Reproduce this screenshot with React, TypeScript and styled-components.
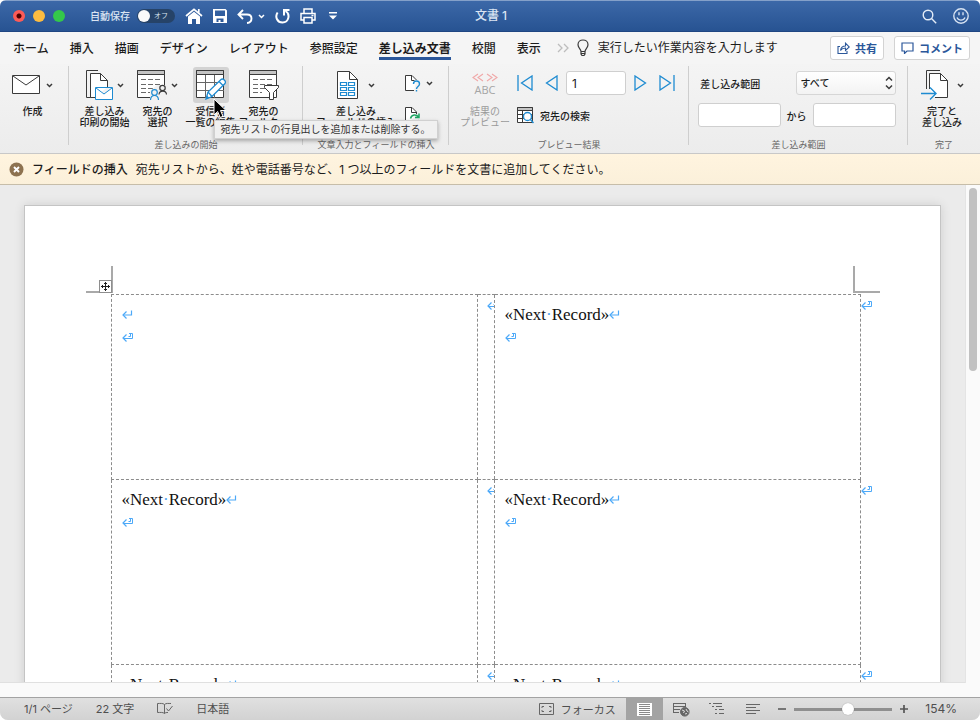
import React from "react";
import styled, { createGlobalStyle, css } from "styled-components";

const INK = "#3a3a3a";
const BLUE = "#1e8bd1";
const BRAND = "#2b579a";

const GlobalStyle = createGlobalStyle`
  *, *::before, *::after { box-sizing: border-box; }
  html, body { margin: 0; padding: 0; background: #fff; }
  body, button, input, select {
    font-family: Inter, "Noto Sans CJK JP", sans-serif;
    color: #1c1c1c;
  }
  button { border: 0; padding: 0; background: none; cursor: default; }
`;

const Window = styled.div`
  display: flex;
  flex-direction: column;
  height: 100vh;
  min-height: 400px;
  overflow: hidden;
  border-radius: 6px 6px 8px 8px;
  background: #ebebeb;
`;

/* Title bar */
const TitleBar = styled.header`
  flex: none;
  display: grid;
  grid-template-columns: 1fr auto 1fr;
  align-items: center;
  height: 32px;
  padding: 0 11px 0 13px;
  color: #fff;
  background: linear-gradient(#3c68a8, #275392);
  border-top: 1px solid #84a0c9;
  border-bottom: 1px solid #1f4682;
`;
const TitleTools = styled.div<{ $end?: boolean }>`
  display: flex;
  align-items: center;
  justify-content: ${(p) => (p.$end ? "flex-end" : "flex-start")};
  gap: ${(p) => (p.$end ? 16 : 10)}px;
  svg { display: block; }
`;
const Lights = styled.div`
  display: flex;
  gap: 8px;
  margin-right: 15px;
`;
const Light = styled.button<{ $color: string; $dot?: boolean }>`
  width: 12px;
  height: 12px;
  border-radius: 50%;
  background: ${(p) => (p.$dot ? `radial-gradient(circle, #4d0000 2px, ${p.$color} 3px)` : p.$color)};
`;
const AutoSave = styled.label`
  display: flex;
  align-items: center;
  gap: 7px;
  font-size: 10px;
  font-weight: 500;
  line-height: 14px;
  color: #dbe5f3;
`;
const Switch = styled.button`
  display: flex;
  align-items: center;
  gap: 4px;
  width: 38px;
  height: 14px;
  padding: 0 1px;
  border-radius: 7px;
  background: #264368;
  color: #dbe5f3;
  font-size: 7px;
  line-height: 12px;
  &::before {
    content: "";
    width: 12px;
    height: 12px;
    border-radius: 50%;
    background: #fafafa;
  }
`;
const IconButton = styled.button`
  display: flex;
  align-items: center;
  justify-content: center;
  gap: 5px;
  color: inherit;
  svg { display: block; flex: none; }
`;
const DocTitle = styled.h1`
  margin: 0;
  font-size: 12px;
  font-weight: 500;
  line-height: 16px;
  color: #dbe5f3;
`;

/* Tabs */
const TabRow = styled.nav`
  flex: none;
  display: flex;
  align-items: center;
  height: 32px;
  padding: 0 10px 0 13px;
  background: #f5f5f5;
`;
const Tabs = styled.div`
  display: flex;
  gap: 21px;
`;
const Tab = styled.button<{ $active?: boolean }>`
  padding: 4px 0 0;
  border-bottom: 3px solid transparent;
  font-size: 12px;
  line-height: 17px;
  font-weight: 500;
  white-space: nowrap;
  ${(p) =>
    p.$active &&
    css`
      font-weight: 700;
      border-image: linear-gradient(${BRAND}, ${BRAND}) 1;
    `}
`;
const TellMe = styled.button`
  display: flex;
  align-items: center;
  gap: 9px;
  margin-left: 8px;
  font-size: 12px;
  line-height: 18px;
  white-space: nowrap;
`;
const More = styled(IconButton)`
  margin-left: 16px;
`;
const TabActions = styled.div`
  display: flex;
  gap: 10px;
  margin-left: auto;
`;
const Outlined = styled.button`
  display: flex;
  align-items: center;
  justify-content: center;
  gap: 5px;
  height: 24px;
  padding: 0 6px;
  border: 1px solid #d3d3d3;
  border-radius: 3px;
  background: #fff;
  color: ${BRAND};
  font-size: 11px;
  font-weight: 700;
  white-space: nowrap;
`;

/* Ribbon */
const Ribbon = styled.div`
  flex: none;
  display: grid;
  grid-template-columns: 69fr 234fr 146fr 240fr 219fr 72fr;
  height: 90px;
  background: linear-gradient(#f4f4f4, #ececec);
  border-bottom: 1px solid #c8c8c8;
`;
const Group = styled.section`
  position: relative;
  display: flex;
  flex-direction: column;
  align-items: center;
  padding-top: 3px;
  &:not(:last-child)::after {
    content: "";
    position: absolute;
    right: 0;
    top: 2px;
    height: 79px;
    width: 1px;
    background: #cecece;
  }
`;
const GroupBody = styled.div<{ $gap?: number }>`
  flex: 1;
  display: flex;
  gap: ${(p) => p.$gap ?? 1}px;
  padding-right: 4px;
`;
const Caption = styled.div`
  height: 14px;
  font-size: 9px;
  line-height: 12px;
  color: #666;
  white-space: nowrap;
`;
const BigButton = styled.button<{ $faded?: boolean; $w?: number }>`
  position: relative;
  display: flex;
  flex-direction: column;
  align-items: center;
  align-self: flex-start;
  width: ${(p) => p.$w ?? 52}px;
  font-size: 10px;
  line-height: 11px;
  font-weight: 500;
  white-space: nowrap;
  ${(p) => p.$faded && css`color: #9a9a9a; font-weight: 400;`}
`;
const Face = styled.span<{ $pressed?: boolean; $gap?: number }>`
  display: flex;
  align-items: center;
  justify-content: center;
  gap: ${(p) => p.$gap ?? 3}px;
  height: 36px;
  margin-bottom: 3px;
  padding: 0 3px;
  border-radius: 3px;
  background: ${(p) => (p.$pressed ? "#d3d3d3" : "transparent")};
  svg { display: block; flex: none; }
`;
const Tooltip = styled.span`
  position: absolute;
  z-index: 3;
  left: 29px;
  top: 53px;
  padding: 0 6px;
  background: #f0f0f0;
  border: 1px solid #d0d0d0;
  box-shadow: 0 2px 4px rgba(0, 0, 0, 0.3);
  font-size: 10px;
  line-height: 17px;
  font-weight: 400;
  white-space: nowrap;
  color: #333;
`;
const Pointer = styled.svg`
  position: absolute;
  z-index: 4;
  left: 28px;
  top: 31px;
`;
const Abc = styled.span`
  display: flex;
  flex-direction: column;
  align-items: center;
  gap: 1px;
  font-family: "Open Sans", sans-serif;
  font-size: 11px;
  line-height: 14px;
  color: #a5a5a5;
`;
const Row = styled.div<{ $gap?: number }>`
  display: flex;
  align-items: center;
  gap: ${(p) => p.$gap ?? 0}px;
  height: 24px;
  font-size: 10px;
  font-weight: 500;
  white-space: nowrap;
`;
const Stack = styled.div`
  display: flex;
  flex-direction: column;
  gap: 8px;
  padding-top: 4px;
`;
const Spread = styled(Row)`
  justify-content: space-between;
`;
const Field = styled.input<{ $w: number }>`
  width: ${(p) => p.$w}px;
  height: 24px;
  padding: 0 5px;
  border: 1px solid #cfcfcf;
  border-radius: 3px;
  background: #fff;
  font-size: 12px;
`;
const SelectBox = styled.span`
  display: grid;
  align-items: center;
  width: 100px;
  height: 24px;
  border: 1px solid #d6d6d6;
  border-radius: 3px;
  background: linear-gradient(#fff, #f3f3f3);
  > * { grid-area: 1 / 1; }
  svg { justify-self: end; margin-right: 2px; pointer-events: none; }
`;
const Select = styled.select`
  appearance: none;
  height: 22px;
  padding: 0 4px;
  border: 0;
  background: none;
  font-size: 10px;
  font-weight: 500;
`;
const FindButton = styled(IconButton)`
  gap: 6px;
  font-size: 10px;
  font-weight: 500;
  color: #1c1c1c;
`;

/* Message bar */
const Message = styled.div`
  flex: none;
  display: flex;
  align-items: center;
  gap: 8px;
  height: 31px;
  padding: 1px 9px 0;
  background: linear-gradient(#fff4df, #fbf0da);
  border-bottom: 1px solid #c6bda9;
  font-size: 12px;
  line-height: 18px;
  white-space: nowrap;
  strong { font-weight: 500; }
  p { margin: 0; }
`;

/* Document */
const Workspace = styled.main`
  flex: 1;
  min-height: 0;
  display: flex;
`;
const Canvas = styled.div`
  flex: 1;
  min-width: 0;
  padding: 20px 24px 0;
  overflow: hidden;
  border-bottom: 1px solid #e0e0e0;
`;
const Page = styled.article`
  min-height: 1200px;
  padding-top: 60px;
  background: #fff;
  border: 1px solid #c4c4c4;
  box-shadow: 0 0 10px rgba(0, 0, 0, 0.12);
`;
const CropMarks = styled.div`
  display: flex;
  justify-content: space-between;
  height: 28px;
  padding: 0 60px 1px 61px;
`;
const Corner = styled.div<{ $side: "left" | "right" }>`
  position: relative;
  width: 27px;
  border-bottom: 2px solid #a9a9a9;
  ${(p) => (p.$side === "left" ? "border-right" : "border-left")}: 2px solid #a9a9a9;
`;
const MoveHandle = styled.button`
  position: absolute;
  right: -1px;
  bottom: -2px;
  display: flex;
  align-items: center;
  justify-content: center;
  width: 13px;
  height: 13px;
  border: 1px solid #8e8e8e;
  background: #fff;
`;
const Labels = styled.table`
  width: 100%;
  padding: 0;
  border-collapse: collapse;
  table-layout: fixed;
  font-family: "Liberation Serif", serif;
  font-size: 17px;
  line-height: 23px;
  color: #111;
`;
const Edge = styled.col<{ $w: number }>`
  width: ${(p) => p.$w}px;
`;
const Cell = styled.td`
  height: 185px;
  padding: 8px 10px;
  vertical-align: top;
  border: 1px dashed #8c8c8c;
  p { display: flex; align-items: center; height: 23px; margin: 0; white-space: pre; }
`;
const MarkCell = styled.td<{ $end?: boolean }>`
  padding: 0;
  vertical-align: top;
  overflow: hidden;
  ${(p) => !p.$end && css`border-top: 1px dashed #8c8c8c; border-bottom: 1px dashed #8c8c8c;`}
  svg { display: block; margin-top: 5px; ${(p) => !p.$end && css`margin-left: 9px;`} }
`;
const Margin = styled.td`
  padding: 0;
`;
const SpaceDot = styled.span`
  color: #4da3f0;
`;
const ScrollTrack = styled.div`
  flex: none;
  width: 15px;
  padding: 3px 3px 0;
  background: #fafafa;
  border-left: 1px solid #e4e4e4;
`;
const ScrollThumb = styled.div`
  width: 8px;
  height: 37%;
  border-radius: 4px;
  background: #c1c1c1;
`;
const BottomStrip = styled.div`
  flex: none;
  height: 14px;
  background: #fafafa;
`;

/* Status bar */
const StatusBar = styled.footer`
  flex: none;
  display: flex;
  align-items: center;
  justify-content: space-between;
  height: 23px;
  padding: 0 23px 0 24px;
  background: linear-gradient(#e0e0e0, #d2d2d2);
  border-top: 1px solid #a3a3a3;
  color: #4f4f4f;
  font-size: 11px;
  line-height: 16px;
`;
const StatusPart = styled.div<{ $gap: number }>`
  display: flex;
  align-items: center;
  gap: ${(p) => p.$gap}px;
  height: 100%;
  white-space: nowrap;
`;
const ZoomPart = styled(StatusPart)`
  margin-left: 7px;
`;
const StatusButton = styled(IconButton)<{ $on?: boolean; $w?: number }>`
  height: 22px;
  gap: 7px;
  font-size: 11px;
  ${(p) => p.$w && css`width: ${p.$w}px;`}
  background: ${(p) => (p.$on ? "#a3a3a3" : "transparent")};
`;
const Zoom = styled.input`
  appearance: none;
  width: 98px;
  height: 12px;
  margin: 0;
  background: linear-gradient(#8f8f8f, #8f8f8f) center / 100% 3px no-repeat;
  &::-webkit-slider-thumb {
    appearance: none;
    width: 12px;
    height: 12px;
    border-radius: 50%;
    background: #fff;
    box-shadow: 0 0 1px rgba(0, 0, 0, 0.4);
  }
`;
const ZoomValue = styled.span`
  margin-left: 9px;
  font-size: 12px;
`;

const Chevron = ({ color = INK }: { color?: string }) => (
  <svg width="7" height="5" viewBox="0 0 8 6" fill="none" stroke={color} strokeWidth="1.8">
    <path d="M1 1.2 4 4.2 7 1.2" />
  </svg>
);

const Envelope = () => (
  <svg width="28" height="28" viewBox="0 0 28 28" fill="#fff" stroke={INK}>
    <path d="M.5 4.5h27v18H.5z" />
    <path d="m1 5 13 9 13-9" fill="none" />
  </svg>
);

const PagesEnvelope = () => (
  <svg width="28" height="30" viewBox="0 0 28 30" fill="none" stroke={INK}>
    <path d="M5 27.500H.5V.5H12" />
    <path d="M9 27.500H4.500V3.500H14.500L21.500 10.500V17" fill="#fff" />
    <path d="M14.500 3.500v7h7" />
    <path d="M9.500 17.500h17v12h-17zM10 18l8 6 8-6" fill="#fff" stroke={BLUE} />
  </svg>
);

const Sheet = () => (
  <>
    <path d="M.5.5h27v27H.5z" fill="#fff" />
    <path d="M.5.5h27v4H.5z" fill="#c4c4c4" />
  </>
);
const SheetLines = () => (
  <path d="M4 9.500h5m2 0h5m2 0h5M4 14.500h5m2 0h5m2 0h5M4 18.500h5m2 0h5M4 22.500h5m2 0h2" stroke="#6a6a6a" />
);

const SheetPeople = () => (
  <svg width="31" height="30" viewBox="0 0 31 30" fill="none" stroke={INK}>
    <Sheet />
    <SheetLines />
    <path d="M13 30v-9l7-6h11v15z" fill="#f1f1f1" stroke="none" />
    <g strokeWidth="1.200">
      <circle cx="25.500" cy="18" r="2.700" />
      <path d="M22 24.500c.4-4.500 7.200-4.500 7.500 0" />
    </g>
    <g stroke={BLUE} strokeWidth="1.200">
      <circle cx="17.500" cy="22.500" r="2.800" />
      <path d="M13.500 30c.3-6 7.700-6 8 0" />
    </g>
  </svg>
);

const GridPencil = () => (
  <svg width="30" height="30" viewBox="0 0 30 30" fill="none" stroke={INK}>
    <Sheet />
    <path d="M9.500 5v23M18.500 5v23M1 12.500h27M1 20.500h27" stroke="#666" />
    <path d="m10 29 2-7L25 9.500c2-1.500 5.500 1.500 4 4L16 26.500z" fill="#fff" stroke={BLUE} strokeWidth="1.300" />
    <path d="m12 22 4 4.500M23 11.500l4 4" stroke={BLUE} strokeWidth="1.300" />
    <path d="m10 29 1-3.500 2.500 2.500z" fill={BLUE} stroke="none" />
  </svg>
);

const SheetFilter = () => (
  <svg width="30" height="30" viewBox="0 0 30 30" fill="none" stroke={INK}>
    <Sheet />
    <SheetLines />
    <path d="M15.500 15.500h14v2l-5 5v7h-4v-7l-5-5z" fill="#fff" />
  </svg>
);

const FieldPage = () => (
  <svg width="21" height="28" viewBox="0 0 21 28" fill="none" stroke={INK}>
    <path d="M.5.5h12l8 8v19H.5z" fill="#fff" />
    <path d="M12.500.5v8h8" />
    <path
      d="M3.500 11.500h6v3h-6zM11.500 11.500h6v3h-6zM3.500 16.500h6v3h-6zM11.500 16.500h6v3h-6zM3.500 21.500h6v3h-6zM11.500 21.500h6v3h-6z"
      stroke={BLUE}
      strokeWidth="1.200"
    />
  </svg>
);

const QuestionPage = () => (
  <svg width="16" height="17" viewBox="0 0 16 17" fill="none" stroke={INK}>
    <path d="M9 15.500H.5V.5H7L11.500 5" fill="#fff" />
    <path d="M6.500.5v5h3" />
    <path d="M8.500 9c0-4 6-4 6 0 0 2.500-3 2.500-3 5M11.500 15v1.500" stroke={BLUE} strokeWidth="1.400" />
  </svg>
);

const RefreshPage = () => (
  <svg width="16" height="17" viewBox="0 0 16 17" fill="none" stroke={INK}>
    <path d="M4 15.500H.5V.5H7L11.500 5v2" fill="#fff" />
    <path d="M6.500.5v5h5" />
    <path d="M5.500 11.500c1-4.500 6-4.500 8-1.500M14 6.500V10.500h-4M14 13c-1 4-6 4-8 1.500" stroke="#1fa463" strokeWidth="1.500" />
  </svg>
);

const FindSheet = () => (
  <svg width="17" height="17" viewBox="0 0 17 17" fill="none" stroke={INK}>
    <path d="M.5.5h15v15H.5z" fill="#fff" />
    <path d="M.5.500h15v3H.5z" fill="#c4c4c4" />
    <path d="M1 7.500h14M1 11.500h14M5.500 4v11" />
    <circle cx="10.500" cy="9.500" r="4" fill="#fff" stroke={BLUE} strokeWidth="1.300" />
    <path d="m13.300 12.300 3.200 3.700" stroke={BLUE} strokeWidth="1.500" />
  </svg>
);

const MergePages = () => (
  <svg width="28" height="30" viewBox="0 0 28 30" fill="none" stroke={INK}>
    <path d="M5.500 19V.5H19" />
    <path d="M8.500 19V3.500H19.500L26.500 10.500V27.500H14" fill="#fff" />
    <path d="M19.500 3.500v7h7" />
    <path d="M0 23.500h15M9 17.500l6 6-6 6" stroke={BLUE} strokeWidth="1.400" />
  </svg>
);

const arrows = {
  first: { box: "0 0 20 16", w: 20, d: "M1 0v16M15 1v14L4.500 8z" },
  prev: { box: "0 0 13 16", w: 13, d: "M12 1v14L1.500 8z" },
  next: { box: "0 0 13 16", w: 13, d: "M1 1v14L11.500 8z" },
  last: { box: "-4 0 20 16", w: 20, d: "M15 0v16M1 1v14L11.500 8z" },
};
const Arrow = ({ kind }: { kind: keyof typeof arrows }) => (
  <svg width={arrows[kind].w} height="16" viewBox={arrows[kind].box} fill="none" stroke={BLUE} strokeWidth="1.300">
    <path d={arrows[kind].d} />
  </svg>
);

const ReturnMark = ({ end }: { end?: boolean }) => (
  <svg width="12" height="11" viewBox="0 0 12 11" fill="none" stroke="#4da9f8" strokeWidth="1.200">
    <path d="M4.500 2.500 1 6l3.500 3.500" />
    {end ? <path d="M1 6.500h9.500v-5H7M8.500 2v2.500h-2" strokeWidth="1" /> : <path d="M1 6h8.500V1.500" />}
  </svg>
);

const Record = () => (
  <>
    «Next<SpaceDot>·</SpaceDot>Record»
  </>
);

const LabelCell = ({ empty }: { empty?: boolean }) => (
  <Cell>
    <p>
      {!empty && <Record />}
      <ReturnMark />
    </p>
    <p>
      <ReturnMark end />
    </p>
  </Cell>
);

const rows = [{ firstEmpty: true }, { firstEmpty: false }, { firstEmpty: false }];
const tabs = ["ホーム", "挿入", "描画", "デザイン", "レイアウト", "参照設定", "差し込み文書", "校閲", "表示"];

export default function App() {
  return (
    <Window lang="ja">
      <GlobalStyle />
      <TitleBar>
        <TitleTools>
          <Lights>
            <Light $color="#fc5b57" $dot aria-label="閉じる" />
            <Light $color="#fdbc40" aria-label="しまう" />
            <Light $color="#34c84a" aria-label="拡大" />
          </Lights>
          <AutoSave>
            自動保存
            <Switch role="switch" aria-checked="false">オフ</Switch>
          </AutoSave>
          <IconButton aria-label="ホーム">
            <svg width="18" height="16" viewBox="0 0 18 16" fill="#fff">
              <path d="M3 8.500 9 3.700l6 4.800V16h-4v-5H7v5H3z" />
              <path d="m1 8 8-6.700L17 8M13.800 1v4" fill="none" stroke="#fff" strokeWidth="1.700" />
            </svg>
          </IconButton>
          <IconButton aria-label="保存">
            <svg width="14" height="14" viewBox="0 0 14 14" fill="#fff" fillRule="evenodd">
              <path d="M0 0h12.500L14 1.500V14H0zM2 1.500V7h10V1.500zM3.500 9.500V13h2v-2h2v2h3V9.500z" />
            </svg>
          </IconButton>
          <IconButton aria-label="元に戻す">
            <svg width="16" height="15" viewBox="0 0 16 15" fill="none" stroke="#fff" strokeWidth="1.900">
              <path d="M6 1 1.500 5.500 6 10M2 5.500h8c6 0 6 8 0 8.500" />
            </svg>
            <Chevron color="#fff" />
          </IconButton>
          <IconButton aria-label="やり直し">
            <svg width="15" height="16" viewBox="0 0 15 16" fill="none" stroke="#fff" strokeWidth="2">
              <path d="M2.600 4.500C-.5 9 2.500 14.500 7.500 14.500c6.500 0 8-8.500 3-11.500M9 7.500V2h5.500" />
            </svg>
          </IconButton>
          <IconButton aria-label="印刷">
            <svg width="16" height="16" viewBox="0 0 16 16" fill="none" stroke="#fff" strokeWidth="1.500">
              <path d="M4 5V1h8v4M3.500 12H1V5.500h14V12h-2.500M4 9.500h8V15H4z" />
              <path d="M11.500 7.500h2" />
            </svg>
          </IconButton>
          <IconButton aria-label="ツールバーのカスタマイズ">
            <svg width="14" height="8" viewBox="0 0 14 8" fill="#fff">
              <path d="M3 0h8v1.500H3zM3 3.500h8L7 7.500z" />
            </svg>
          </IconButton>
        </TitleTools>
        <DocTitle>文書 1</DocTitle>
        <TitleTools $end>
          <IconButton aria-label="検索">
            <svg width="15" height="15" viewBox="0 0 15 15" fill="none" stroke="#e4ecf7" strokeWidth="1.400">
              <circle cx="6" cy="6" r="4.800" />
              <path d="m9.500 9.500 4.700 4.700" />
            </svg>
          </IconButton>
          <IconButton aria-label="フィードバック">
            <svg width="16" height="16" viewBox="0 0 16 16" fill="none" stroke="#d6e2f2" strokeWidth="1.400">
              <circle cx="8" cy="8" r="7.200" />
              <path d="M6 4.200v3M10 4.200v3M4 9.500c1.500 3.500 6.500 3.500 8 0" />
            </svg>
          </IconButton>
        </TitleTools>
      </TitleBar>

      <TabRow>
        <Tabs>
          {tabs.map((t) => (
            <Tab key={t} $active={t === "差し込み文書"}>{t}</Tab>
          ))}
        </Tabs>
        <More aria-label="その他のタブ">
          <svg width="12" height="10" viewBox="0 0 12 10" fill="none" stroke="#bdbdbd" strokeWidth="1.300">
            <path d="m1 1 4 4-4 4M7 1l4 4-4 4" />
          </svg>
        </More>
        <TellMe>
          <svg width="12" height="18" viewBox="0 0 12 18" fill="none" stroke={INK} strokeWidth="1.200">
            <path d="M4 12.500C4 10 1 9 1 5.800 1 2.800 3.300 1 6 1s5 1.800 5 4.800C11 9 8 10 8 12.500zM4 12.500V15l1 1.500h2L8 15v-2.500M4 14.500h4" />
          </svg>
          実行したい作業内容を入力します
        </TellMe>
        <TabActions>
          <Outlined>
            <svg width="13" height="12" viewBox="0 0 13 12" fill="none" stroke={BRAND} strokeWidth="1.100">
              <path d="M3 4.500H1v7h9V9M3.500 8.500C4 5 6 4 8.500 4V1.200L12.300 5 8.500 8.500V6C6 6 4.500 7 3.500 8.500z" />
            </svg>
            共有
          </Outlined>
          <Outlined>
            <svg width="13" height="12" viewBox="0 0 13 12" fill="none" stroke={BRAND} strokeWidth="1.200">
              <path d="M1 1h11v8H6l-2.500 2.500V9H1z" />
            </svg>
            コメント
          </Outlined>
        </TabActions>
      </TabRow>

      <Ribbon>
        <Group>
          <GroupBody>
            <BigButton>
              <Face $gap={6}><Envelope /><Chevron /></Face>
              作成
            </BigButton>
          </GroupBody>
        </Group>

        <Group>
          <GroupBody>
            <BigButton>
              <Face><PagesEnvelope /><Chevron /></Face>
              差し込み<br />印刷の開始
            </BigButton>
            <BigButton>
              <Face><SheetPeople /><Chevron /></Face>
              宛先の<br />選択
            </BigButton>
            <BigButton>
              <Face $pressed><GridPencil /></Face>
              受信者<br />一覧の編集
              <Pointer width="14" height="21" viewBox="0 0 14 21">
                <path d="M1 1v16l3.700-3.500L7.200 19.500l2.800-1.200-2.500-5.800H13z" fill="#000" stroke="#fff" strokeWidth="1" />
              </Pointer>
              <Tooltip role="tooltip">宛先リストの行見出しを追加または削除する。</Tooltip>
            </BigButton>
            <BigButton>
              <Face><SheetFilter /></Face>
              宛先の<br />フィルター
            </BigButton>
          </GroupBody>
          <Caption>差し込みの開始</Caption>
        </Group>

        <Group>
          <GroupBody $gap={8}>
            <BigButton $w={82}>
              <Face $gap={10}><FieldPage /><Chevron /></Face>
              差し込み<br />フィールドの挿入
            </BigButton>
            <Stack>
              <Row>
                <IconButton aria-label="ルール"><QuestionPage /><Chevron /></IconButton>
              </Row>
              <Row>
                <IconButton aria-label="ラベルの更新"><RefreshPage /></IconButton>
              </Row>
            </Stack>
          </GroupBody>
          <Caption>文章入力とフィールドの挿入</Caption>
        </Group>

        <Group>
          <GroupBody $gap={6}>
            <BigButton $faded>
              <Face>
                <Abc>
                  <svg width="26" height="9" viewBox="0 0 26 9" fill="none" stroke="#f0a8a8" strokeWidth="1.100">
                    <path d="M6 1 1 4.500 6 8M11 1 6 4.500 11 8M15 1l5 3.500L15 8M20 1l5 3.500L20 8" />
                  </svg>
                  ABC
                </Abc>
              </Face>
              結果の<br />プレビュー
            </BigButton>
            <Stack>
              <Spread $gap={8}>
                <IconButton aria-label="先頭のレコード"><Arrow kind="first" /></IconButton>
                <IconButton aria-label="前のレコード"><Arrow kind="prev" /></IconButton>
                <Field $w={60} aria-label="レコード" defaultValue="1" />
                <IconButton aria-label="次のレコード"><Arrow kind="next" /></IconButton>
                <IconButton aria-label="最後のレコード"><Arrow kind="last" /></IconButton>
              </Spread>
              <Row>
                <FindButton><FindSheet />宛先の検索</FindButton>
              </Row>
            </Stack>
          </GroupBody>
          <Caption>プレビュー結果</Caption>
        </Group>

        <Group>
          <GroupBody>
            <Stack>
              <Spread $gap={34}>
                <label htmlFor="range">&nbsp;差し込み範囲</label>
                <SelectBox>
                  <Select id="range" defaultValue="all">
                    <option value="all">すべて</option>
                  </Select>
                  <svg width="8" height="14" viewBox="0 0 8 14" fill="none" stroke={INK} strokeWidth="1.500">
                    <path d="m1 4.500 3-3 3 3M1 9.500l3 3 3-3" />
                  </svg>
                </SelectBox>
              </Spread>
              <Row $gap={6}>
                <Field $w={83} aria-label="開始" />
                <label htmlFor="to">から</label>
                <Field $w={83} id="to" />
              </Row>
            </Stack>
          </GroupBody>
          <Caption>差し込み範囲</Caption>
        </Group>

        <Group>
          <GroupBody>
            <BigButton>
              <Face $gap={8}><MergePages /><Chevron /></Face>
              完了と<br />差し込み
            </BigButton>
          </GroupBody>
          <Caption>完了</Caption>
        </Group>
      </Ribbon>

      <Message role="status">
        <IconButton aria-label="閉じる">
          <svg width="15" height="15" viewBox="0 0 15 15">
            <circle cx="7.500" cy="7.500" r="7" fill="#8d7250" />
            <path d="m5 5 5 5M10 5l-5 5" stroke="#fff" strokeWidth="1.900" />
          </svg>
        </IconButton>
        <strong>フィールドの挿入</strong>
        <p>宛先リストから、姓や電話番号など、1 つ以上のフィールドを文書に追加してください。</p>
      </Message>

      <Workspace>
        <Canvas>
          <Page>
            <CropMarks>
              <Corner $side="left">
                <MoveHandle aria-label="表の移動">
                  <svg width="9" height="9" viewBox="0 0 9 9" fill="none" stroke="#222">
                    <path d="M4.500 0v9M0 4.500h9M3 1.500h3M3 7.500h3M1.500 3v3M7.500 3v3" />
                  </svg>
                </MoveHandle>
              </Corner>
              <Corner $side="right" />
            </CropMarks>
            <Labels>
              <colgroup>
                <Edge $w={86} />
                <col />
                <Edge $w={17} />
                <col />
                <Edge $w={80} />
              </colgroup>
              <tbody>
                {rows.map((r, i) => (
                  <tr key={i}>
                    <Margin />
                    <LabelCell empty={r.firstEmpty} />
                    <MarkCell><ReturnMark end /></MarkCell>
                    <LabelCell />
                    <MarkCell $end><ReturnMark end /></MarkCell>
                  </tr>
                ))}
              </tbody>
            </Labels>
          </Page>
        </Canvas>
        <ScrollTrack><ScrollThumb /></ScrollTrack>
      </Workspace>
      <BottomStrip />

      <StatusBar>
        <StatusPart $gap={23}>
          <span>1/1 ページ</span>
          <span>22 文字</span>
          <StatusButton aria-label="文章校正">
            <svg width="16" height="14" viewBox="0 0 16 14" fill="none" stroke="#666">
              <path d="M7.500 2.500C6 1 3 1.500.5 1.500v9c2.500 0 5.500-.5 7 1 1-1 2-1 3.500-1M7.500 2.500v9M7.500 2.500C9 1 11.500 1.500 14 1.500M9.500 6.500l2 2.500 4-5" />
            </svg>
          </StatusButton>
          <span>日本語</span>
        </StatusPart>
        <StatusPart $gap={0}>
          <StatusButton $w={98}>
            <svg width="15" height="12" viewBox="0 0 15 12" fill="none" stroke="#666">
              <path d="M.5.500h14v11H.5z" />
              <path d="M3 5V3.500h2M10 3.500h2V5M12 7v1.500h-2M5 8.500H3V7" />
            </svg>
            フォーカス
          </StatusButton>
          <StatusButton $on $w={37} aria-label="印刷レイアウト">
            <svg width="15" height="13" viewBox="0 0 15 13" stroke="#8a8a8a">
              <path d="M0 0h15v13H0z" fill="#fff" stroke="none" />
              <path d="M2 1.500h11M2 3.500h11M2 5.500h11M2 7.500h11M2 9.500h11M2 11.500h11" />
            </svg>
          </StatusButton>
          <StatusButton $w={36} aria-label="Web レイアウト">
            <svg width="17" height="15" viewBox="0 0 17 15" fill="none" stroke="#666">
              <path d="M1 1.500h12M1 4.500h12M1 7.500h6M1 10.500h5M.5 1v10M12.500 1v4" />
              <circle cx="11.800" cy="9.800" r="4.300" fill="#666" />
              <path d="M9 8l2.500 1-1 2M13 7l1 2 1.500 1M12 12l2-.5" stroke="#ddd" />
            </svg>
          </StatusButton>
          <StatusButton $w={36} aria-label="アウトライン">
            <svg width="16" height="12" viewBox="0 0 16 12" stroke="#666">
              <path d="M0 .5h2M4 .5h9M3 3.500h2M7 3.500h6M6 6.500h2M10 6.500h5M6 10.500h2M10 10.500h5" />
            </svg>
          </StatusButton>
          <StatusButton $w={36} aria-label="下書き">
            <svg width="14" height="12" viewBox="0 0 14 12" stroke="#666">
              <path d="M0 1.500h14M0 4.500h10M0 7.500h14M0 10.500h10" />
            </svg>
          </StatusButton>
          <ZoomPart $gap={8}>
            <IconButton aria-label="縮小">
              <svg width="8" height="8" viewBox="0 0 8 8" stroke="#555" strokeWidth="1.700"><path d="M0 4h8" /></svg>
            </IconButton>
            <Zoom type="range" min="0" max="100" defaultValue="56" aria-label="ズーム" />
            <IconButton aria-label="拡大">
              <svg width="8" height="8" viewBox="0 0 8 8" stroke="#555" strokeWidth="1.700"><path d="M0 4h8M4 0v8" /></svg>
            </IconButton>
            <ZoomValue>154%</ZoomValue>
          </ZoomPart>
        </StatusPart>
      </StatusBar>
    </Window>
  );
}
